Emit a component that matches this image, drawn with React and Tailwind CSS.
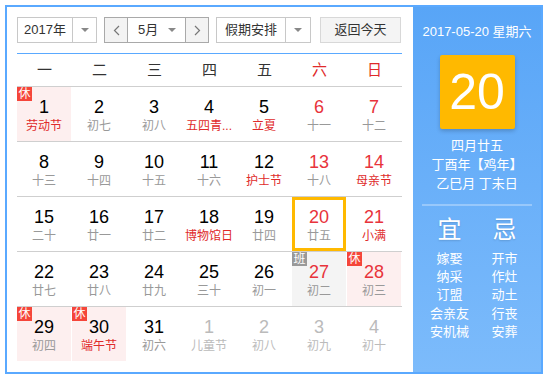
const weeks = [
  [
    { d: 1, l: '劳动节', hol: true, tag: '休' },
    { d: 2, l: '初七' },
    { d: 3, l: '初八' },
    { d: 4, l: '五四青...', hol: true },
    { d: 5, l: '立夏', hol: true },
    { d: 6, l: '十一' },
    { d: 7, l: '十二' },
  ],
  [
    { d: 8, l: '十三' },
    { d: 9, l: '十四' },
    { d: 10, l: '十五' },
    { d: 11, l: '十六' },
    { d: 12, l: '护士节', hol: true },
    { d: 13, l: '十八' },
    { d: 14, l: '母亲节', hol: true },
  ],
  [
    { d: 15, l: '二十' },
    { d: 16, l: '廿一' },
    { d: 17, l: '廿二' },
    { d: 18, l: '博物馆日', hol: true },
    { d: 19, l: '廿四' },
    { d: 20, l: '廿五', today: true },
    { d: 21, l: '小满', hol: true },
  ],
  [
    { d: 22, l: '廿七' },
    { d: 23, l: '廿八' },
    { d: 24, l: '廿九' },
    { d: 25, l: '三十' },
    { d: 26, l: '初一' },
    { d: 27, l: '初二', tag: '班' },
    { d: 28, l: '初三', tag: '休' },
  ],
  [
    { d: 29, l: '初四', tag: '休' },
    { d: 30, l: '端午节', hol: true, tag: '休' },
    { d: 31, l: '初六' },
    { d: 1, l: '儿童节', other: true },
    { d: 2, l: '初八', other: true },
    { d: 3, l: '初九', other: true },
    { d: 4, l: '初十', other: true },
  ],
]

const yi = ['嫁娶', '纳采', '订盟', '会亲友', '安机械']
const ji = ['开市', '作灶', '动土', '行丧', '安葬']

function Caret() {
  return <span className="inline-block h-0 w-0 border-x-[4px] border-t-[4px] border-x-transparent border-t-[#888]" />
}

function Day({ c, col }) {
  const weekend = col >= 5
  let bg = ''
  if (c.tag === '休') bg = 'bg-[#fdefef]'
  if (c.tag === '班') bg = 'bg-[#f4f4f4]'
  const numColor = c.other ? 'text-[#bbb]' : weekend ? 'text-[#e8333b]' : 'text-[#000]'
  const lunColor = c.other ? 'text-[#bbb]' : c.hol ? 'text-[#e02a2a]' : 'text-[#999]'
  return (
    <div className={`relative h-[54px] w-[54px] text-center ${bg} ${c.today ? 'border-[3px] border-[#ffb900]' : ''}`}>
      {c.tag && (
        <span className={`absolute left-0 top-0 h-[14px] w-[15px] text-[12px] leading-[14px] text-white ${c.tag === '休' ? 'bg-[#f5453a]' : 'bg-[#999]'}`}>
          {c.tag}
        </span>
      )}
      <div className={`${c.today ? 'pt-[7px]' : 'pt-[10px]'} text-[18px] leading-[20px] ${numColor}`}>{c.d}</div>
      <div className={`mt-px whitespace-nowrap text-[12px] leading-[16px] ${lunColor}`}>{c.l}</div>
    </div>
  )
}

export default function App() {
  return (
    <div className="pl-[5px] pt-[5px] font-['Liberation_Sans','Noto_Sans_CJK_SC',sans-serif]">
      <div className="flex h-[369px] w-[538px] border-2 border-[#5aa9ff]">
        <div className="w-[406px] pl-[10px] pt-[10px]">
          <div className="flex h-[26px] text-[13px] text-[#333]">
            <div className="flex w-[80px] border border-[#c8c8c8]">
              <div className="flex flex-1 items-center justify-center">2017年</div>
              <div className="flex w-[24px] items-center justify-center border-l border-[#c8c8c8]"><Caret /></div>
            </div>
            <div className="ml-[7px] flex w-[105px] border border-[#a9a9a9]">
              <div className="flex w-[22px] items-center justify-center bg-[#f3f3f3] text-[#777]">
                <svg width="7" height="11" viewBox="0 0 7 11"><path d="M6 1L1.5 5.5 6 10" fill="none" stroke="#777" strokeWidth="1.2" /></svg>
              </div>
              <div className="flex flex-1 items-center justify-between border-x border-[#a9a9a9] pl-[10px] pr-[9px]">
                <span>5月</span>
                <Caret />
              </div>
              <div className="flex w-[22px] items-center justify-center bg-[#f3f3f3]">
                <svg width="7" height="11" viewBox="0 0 7 11"><path d="M1 1l4.5 4.5L1 10" fill="none" stroke="#777" strokeWidth="1.2" /></svg>
              </div>
            </div>
            <div className="ml-[7px] flex w-[95px] border border-[#c8c8c8]">
              <div className="flex flex-1 items-center justify-center">假期安排</div>
              <div className="flex w-[25px] items-center justify-center border-l border-[#c8c8c8]"><Caret /></div>
            </div>
            <div className="ml-[9px] flex w-[81px] items-center justify-center border border-[#d8d8d8] bg-[#f4f4f4]">返回今天</div>
          </div>

          <div className="mt-[10px] w-[385px] border-t border-[#5aa9ff]" />
          <div className="flex h-[33px] w-[385px] items-center border-b border-[#cfcfcf] text-[15px]">
            {['一', '二', '三', '四', '五', '六', '日'].map((w, i) => (
              <div key={w} className={`w-[55px] text-center ${i >= 5 ? 'text-[#e02a2a]' : 'text-[#333]'}`}>{w}</div>
            ))}
          </div>

          <div className="w-[385px]">
            {weeks.map((row, r) => (
              <div key={r} className={`flex gap-px ${r < 4 ? 'border-b border-[#cfcfcf]' : ''}`}>
                {row.map((c, i) => (
                  <Day key={i} c={c} col={i} />
                ))}
              </div>
            ))}
          </div>
        </div>

        <div className="flex flex-1 flex-col items-center bg-gradient-to-b from-[#58a5f7] to-[#7cbbfb] pt-[16px] text-white">
          <div className="text-[13px] leading-[18px]">2017-05-20 星期六</div>
          <div className="mt-[14px] flex h-[74px] w-[75px] items-center justify-center rounded-[2px] bg-[#ffb900] text-[50px] leading-none shadow-[0_2px_4px_rgba(0,0,0,0.2)]">
            20
          </div>
          <div className="mt-[7px] text-center text-[13px] leading-[19px]">
            <div>四月廿五</div>
            <div>丁酉年【鸡年】</div>
            <div>乙巳月 丁未日</div>
          </div>
          <div className="mt-[11px] h-[2px] w-[110px] bg-white/30" />
          <div className="mt-[9px] flex w-[110px] text-center">
            <div className="w-[55px]">
              <div className="text-[24px] leading-[30px] [text-shadow:0_1px_2px_rgba(0,0,0,0.15)]">宜</div>
              <div className="mt-[5px] text-[13px] leading-[18.2px]">
                {yi.map((t) => <div key={t}>{t}</div>)}
              </div>
            </div>
            <div className="w-[55px]">
              <div className="text-[24px] leading-[30px] [text-shadow:0_1px_2px_rgba(0,0,0,0.15)]">忌</div>
              <div className="mt-[5px] text-[13px] leading-[18.2px]">
                {ji.map((t) => <div key={t}>{t}</div>)}
              </div>
            </div>
          </div>
        </div>
      </div>
    </div>
  )
}
